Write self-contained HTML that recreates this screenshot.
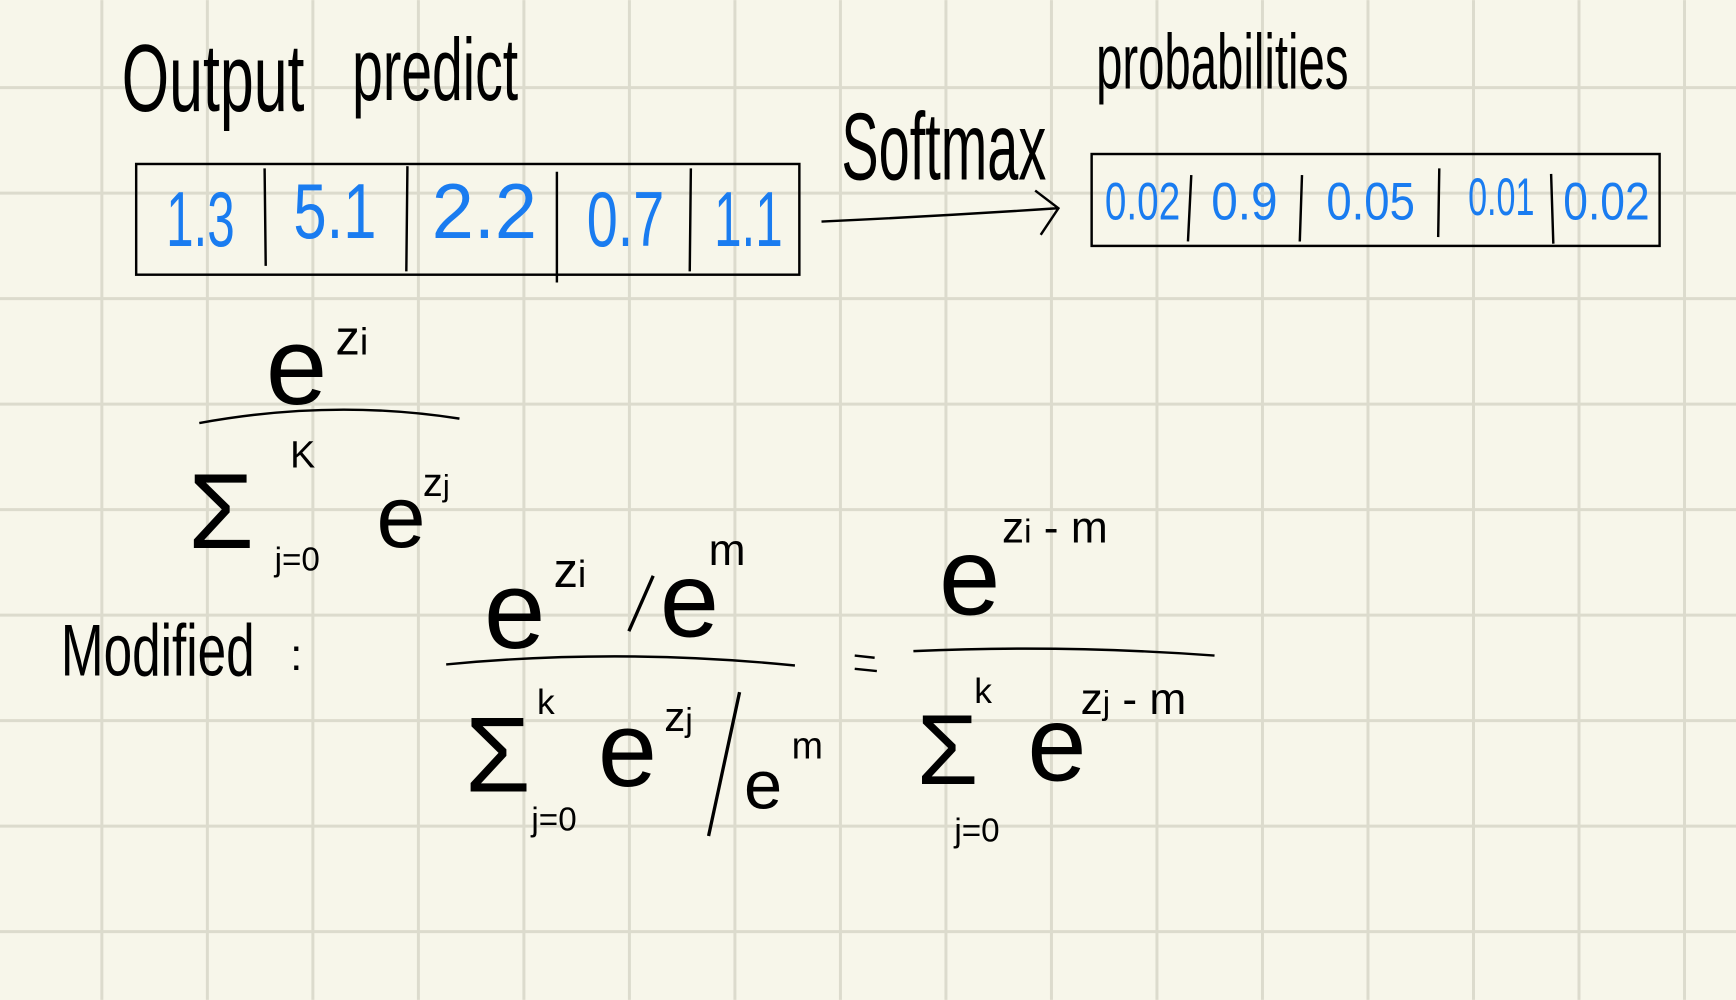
<!DOCTYPE html>
<html><head><meta charset="utf-8"><style>
html,body{margin:0;padding:0;background:#f7f6ea;}
svg{display:block}
text{font-family:"Liberation Sans",sans-serif;}
</style></head><body>
<svg width="1736" height="1000" viewBox="0 0 1568 903" xmlns="http://www.w3.org/2000/svg">
<rect width="1568" height="903" fill="#f7f6ea"/>
<g stroke="#dcdbcd" stroke-width="2.7">
<line x1="92" y1="0" x2="92" y2="903"/><line x1="187.3" y1="0" x2="187.3" y2="903"/><line x1="282.6" y1="0" x2="282.6" y2="903"/><line x1="377.9" y1="0" x2="377.9" y2="903"/><line x1="473.2" y1="0" x2="473.2" y2="903"/><line x1="568.5" y1="0" x2="568.5" y2="903"/><line x1="663.8" y1="0" x2="663.8" y2="903"/><line x1="759.1" y1="0" x2="759.1" y2="903"/><line x1="854.4" y1="0" x2="854.4" y2="903"/><line x1="949.7" y1="0" x2="949.7" y2="903"/><line x1="1045" y1="0" x2="1045" y2="903"/><line x1="1140.3" y1="0" x2="1140.3" y2="903"/><line x1="1235.6" y1="0" x2="1235.6" y2="903"/><line x1="1330.9" y1="0" x2="1330.9" y2="903"/><line x1="1426.2" y1="0" x2="1426.2" y2="903"/><line x1="1521.5" y1="0" x2="1521.5" y2="903"/>
<line y1="79" x1="0" y2="79" x2="1568"/><line y1="174.3" x1="0" y2="174.3" x2="1568"/><line y1="269.6" x1="0" y2="269.6" x2="1568"/><line y1="364.9" x1="0" y2="364.9" x2="1568"/><line y1="460.2" x1="0" y2="460.2" x2="1568"/><line y1="555.5" x1="0" y2="555.5" x2="1568"/><line y1="650.8" x1="0" y2="650.8" x2="1568"/><line y1="746.1" x1="0" y2="746.1" x2="1568"/><line y1="841.4" x1="0" y2="841.4" x2="1568"/>
</g>
<g fill="none" stroke="#000" stroke-width="2.2">
<rect x="123" y="148" width="599" height="100"/>
<rect x="986" y="139" width="513" height="83"/>
<path d="M239 152 L240 240 M368 150 L367 245 M503 155 L503 255 M624 152 L623 245"/>
<path d="M1076 158 L1073 218 M1176 158 L1174 218 M1300 152 L1299 214 M1401 157 L1403 220"/>
<path d="M742 200 Q850 195 955 188 M935 172 L956 188 L940 212"/>
<path d="M180 382 Q300 360 415 378"/>
<path d="M403 600 Q560 585 718 601"/>
<path d="M825 588 Q960 582 1097 592"/>
<path d="M772 592 L790 594 M772 604 L792 606"/>
</g>
<g fill="#1a7cf0" font-size="70">
<text x="150" y="222" textLength="62" lengthAdjust="spacingAndGlyphs">1.3</text>
<text x="265" y="215" textLength="75" lengthAdjust="spacingAndGlyphs">5.1</text>
<text x="390" y="215" textLength="95" lengthAdjust="spacingAndGlyphs">2.2</text>
<text x="530" y="222" textLength="70" lengthAdjust="spacingAndGlyphs">0.7</text>
<text x="645" y="222" textLength="62" lengthAdjust="spacingAndGlyphs">1.1</text>
</g>
<g fill="#1a7cf0" font-size="48">
<text x="998" y="198" textLength="68" lengthAdjust="spacingAndGlyphs">0.02</text>
<text x="1094" y="198" textLength="60" lengthAdjust="spacingAndGlyphs">0.9</text>
<text x="1198" y="198" textLength="80" lengthAdjust="spacingAndGlyphs">0.05</text>
<text x="1326" y="194" textLength="60" lengthAdjust="spacingAndGlyphs">0.01</text>
<text x="1412" y="198" textLength="78" lengthAdjust="spacingAndGlyphs">0.02</text>
</g>
<g fill="#000">
<text x="110" y="100" font-size="86" textLength="165" lengthAdjust="spacingAndGlyphs">Output</text>
<text x="318" y="90" font-size="80" textLength="150" lengthAdjust="spacingAndGlyphs">predict</text>
<text x="990" y="80" font-size="70" textLength="228" lengthAdjust="spacingAndGlyphs">probabilities</text>
<text x="760" y="162" font-size="86" textLength="185" lengthAdjust="spacingAndGlyphs">Softmax</text>
<text x="240" y="365" font-size="100">e</text>
<text x="303" y="320" font-size="44">z<tspan font-size="34">i</tspan></text>
<text x="170" y="495" font-size="96">Σ</text>
<text x="262" y="422" font-size="34">K</text>
<text x="248" y="515" font-size="30">j=0</text>
<text x="340" y="494" font-size="80">e</text>
<text x="382" y="448" font-size="36">z<tspan font-size="28">j</tspan></text>
<text x="55" y="610" font-size="66" textLength="175" lengthAdjust="spacingAndGlyphs">Modified</text>
<text x="262" y="605" font-size="40">:</text>
<text x="437" y="585" font-size="100">e</text>
<text x="500" y="530" font-size="44">z<tspan font-size="34">i</tspan></text>
<path d="M590 520 L568 570" stroke="#000" stroke-width="3" fill="none"/>
<text x="596" y="575" font-size="96">e</text>
<text x="640" y="510" font-size="40">m</text>
<text x="420" y="715" font-size="96">Σ</text>
<text x="485" y="645" font-size="32">k</text>
<text x="480" y="750" font-size="30">j=0</text>
<text x="540" y="710" font-size="96">e</text>
<text x="600" y="660" font-size="38">z<tspan font-size="30">j</tspan></text>
<path d="M668 625 L640 755" stroke="#000" stroke-width="3" fill="none"/>
<text x="672" y="730" font-size="62">e</text>
<text x="715" y="685" font-size="34">m</text>
<text x="848" y="555" font-size="100">e</text>
<text x="905" y="490" font-size="40">z<tspan font-size="30">i</tspan> - m</text>
<text x="828" y="708" font-size="90">Σ</text>
<text x="880" y="635" font-size="32">k</text>
<text x="862" y="760" font-size="30">j=0</text>
<text x="928" y="705" font-size="96">e</text>
<text x="976" y="645" font-size="40">z<tspan font-size="30">j</tspan> - m</text>
</g>
</svg>
</body></html>
